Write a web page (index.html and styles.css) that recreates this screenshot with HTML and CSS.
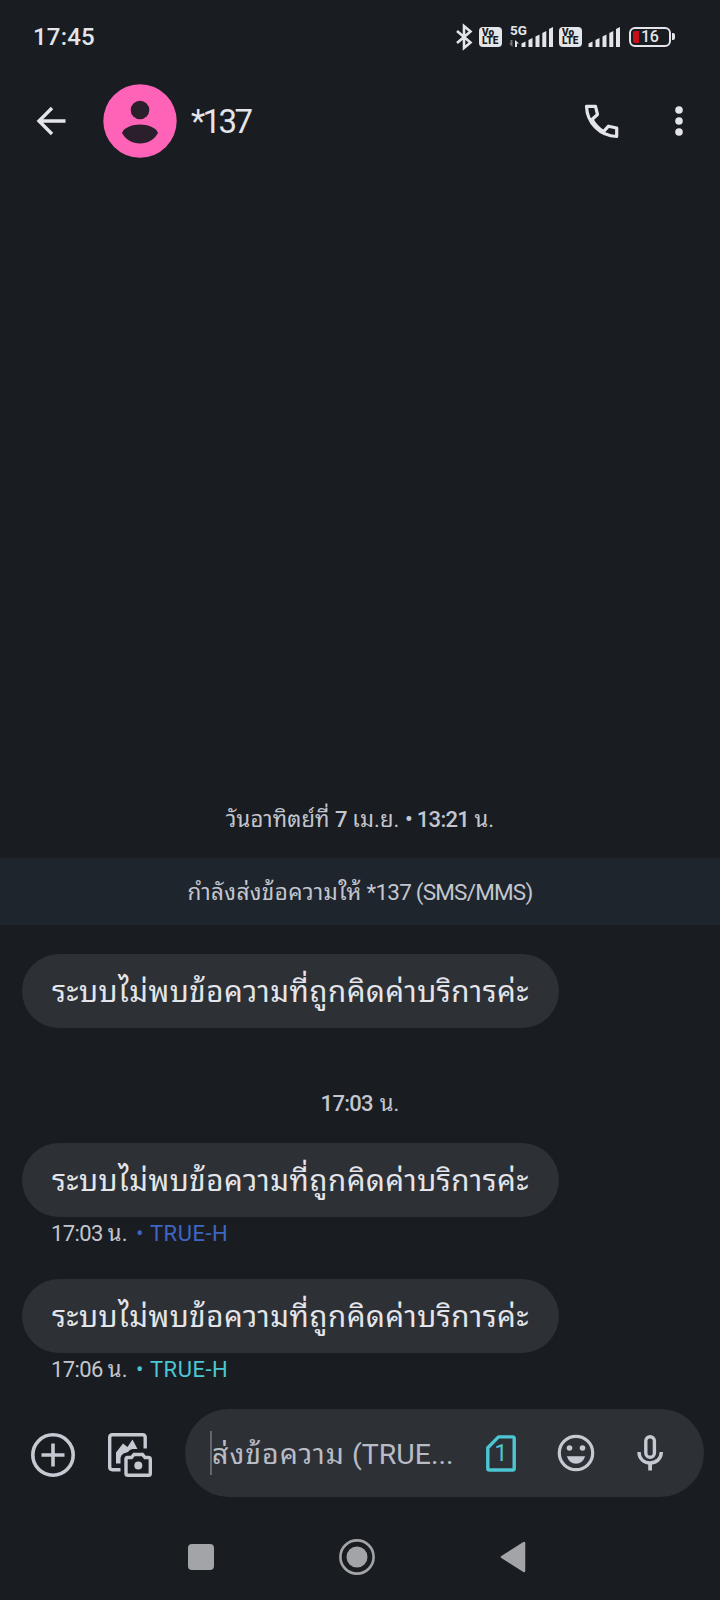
FILE: index.html
```html
<!DOCTYPE html>
<html lang="th">
<head>
<meta charset="utf-8">
<title>*137</title>
<link rel="stylesheet" href="styles.css">
</head>
<body>
<div class="phone">
  <div class="status">
    <span class="clock">17:45</span>
    <div class="status-icons">
      <svg class="bt" width="18" height="28" viewBox="0 0 18 28" fill="none" stroke="#e3e5ea" stroke-width="2.600"><path d="M2 8L15.500 19.500L9 25V3L15.500 8.500L2 20"/></svg>
      <span class="volte"><span>Vo</span><span>LTE</span></span>
      <span class="cell">
        <svg width="44" height="20" viewBox="0 0 44 20" fill="#e3e5ea"><path d="M12.500 16.500l4-2V20h-4zM19.500 13l4-2V20h-4zM26.500 9.500l4-2V20h-4zM33.300 6l4-2V20h-4zM40 2l4-2v20h-4z"/><path d="M6 13l4 3.500H8V20H6z"/><path d="M3.500 20L0 16.500h1.500V13h2z" opacity=".45"/></svg>
        <span class="five">5G</span>
      </span>
      <span class="volte second"><span>Vo</span><span>LTE</span></span>
      <svg class="bars" width="32" height="20" viewBox="12 0 32 20" fill="#e3e5ea"><path d="M12.500 16.500l4-2V20h-4zM19.500 13l4-2V20h-4zM26.500 9.500l4-2V20h-4zM33.300 6l4-2V20h-4zM40 2l4-2v20h-4z"/></svg>
      <span class="battery"><span class="level"></span><span class="pct">16</span></span>
      <span class="tip"></span>
    </div>
  </div>

  <header class="bar">
    <svg class="back" width="30" height="30" viewBox="0 0 30 30" fill="none" stroke="#e3e5ea" stroke-width="3.400"><path d="M16 2L3 15L16 28M3 15H29.500"/></svg>
    <svg class="avatar" width="74" height="74" viewBox="0 0 74 74"><circle cx="37" cy="37" r="36.700" fill="#ff63b8"/><circle cx="37" cy="26" r="9.300" fill="#2a1f2b"/><path d="M19 49C21 43.500 29 40.500 37 40.500S53 43.500 55 49C51.500 55.500 44.500 59.500 37 59.500S22.500 55.500 19 49Z" fill="#2a1f2b"/></svg>
    <span class="name">*137</span>
    <svg class="call" width="35" height="35" viewBox="0 0 35 35" fill="none" stroke="#e3e5ea" stroke-width="3.200" stroke-linejoin="round"><path d="M2.500 2.300H11.500L13.500 10.500L8 15.500C11 21 14.500 24.500 19.500 27.600L24.500 22.200L32.700 24V32.500C16 32 3 19 2.500 2.300Z"/></svg>
    <svg class="more" width="8" height="32" viewBox="0 0 8 32" fill="#e3e5ea"><circle cx="4" cy="5" r="3.800"/><circle cx="4" cy="16" r="3.800"/><circle cx="4" cy="27" r="3.800"/></svg>
  </header>

  <main class="thread">
    <div class="stamp"><span class="date"><span class="th">วันอาทิตย์ที่</span> <b>7</b> <span class="th">เม.ย.</span> <b>• 13:21</b> น.</span></div>
    <div class="banner"><span class="notice"><span class="th">กำลังส่งข้อความให้</span> *137 (SMS/MMS)</span></div>
    <div class="bubble first">ระบบไม่พบข้อความที่ถูกคิดค่าบริการค่ะ</div>
    <div class="stamp later"><span><b>17:03</b> น.</span></div>
    <div class="bubble">ระบบไม่พบข้อความที่ถูกคิดค่าบริการค่ะ</div>
    <div class="meta"><span class="time">17:03 <span class="th">น.</span></span><span class="sim blue">• TRUE-H</span></div>
    <div class="bubble">ระบบไม่พบข้อความที่ถูกคิดค่าบริการค่ะ</div>
    <div class="meta"><span class="time">17:06 <span class="th">น.</span></span><span class="sim teal">• TRUE-H</span></div>
  </main>

  <div class="compose">
    <svg class="plus" width="44" height="44" viewBox="0 0 44 44" fill="none" stroke="#c6c8d2" stroke-width="3.600"><circle cx="22" cy="22" r="20.200"/><path d="M22 10.500V33.500M10.500 22H33.500"/></svg>
    <svg class="gallery" width="44" height="44" viewBox="0 0 44 44" fill="none" stroke="#c6c8d2" stroke-width="3.400"><path d="M37.200 15.500V4.500Q37.200 1.700 34.500 1.700H4.500Q1.700 1.700 1.700 4.500V34Q1.700 36.700 4.500 36.700H12.500"/><path d="M8 30.500V19.500L15 10.500L19.500 14L24.500 6.500L29.500 16H24.500Q21.500 16.500 20 19L15.500 20.500Q12.800 22 12.500 25V30.500Z" fill="#c6c8d2" stroke="none"/><path d="M19.500 24.500H23.500L26 21.500H34.500L37 24.500H40.500Q42.300 24.500 42.300 26.500V40.500Q42.300 42.300 40.500 42.300H20Q18 42.300 18 40.500V26.500Q18 24.500 19.500 24.500Z"/><circle cx="30.300" cy="32.500" r="4" fill="#c6c8d2" stroke="none"/></svg>
    <div class="field">
      <span class="caret"></span>
      <span class="hint"><span class="th">ส่งข้อความ</span> (TRUE...</span>
      <span class="simcard"><svg width="30" height="37" viewBox="0 0 30 37" fill="none" stroke="#4cc6d3" stroke-width="3.400" stroke-linejoin="round"><path d="M12.500 1.900H26.500Q28.200 1.900 28.200 3.600V33.400Q28.200 35 26.500 35H3.500Q1.800 35 1.800 33.400V12.800Z"/></svg><span class="simno">1</span></span>
      <svg class="smile" width="38" height="38" viewBox="0 0 38 38" fill="#c6c8d2"><circle cx="19" cy="19" r="16.700" fill="none" stroke="#c6c8d2" stroke-width="3.200"/><circle cx="12.500" cy="14" r="2.800"/><circle cx="25.500" cy="14" r="2.800"/><path d="M9.800 22.200H28.200Q25.500 29.700 19 29.700T9.800 22.200Z"/></svg>
      <svg class="mic" width="26" height="36" viewBox="0 0 26 36" fill="none" stroke="#c6c8d2" stroke-width="3.400"><rect x="8.800" y="1.700" width="8.600" height="20.500" rx="4.300"/><path d="M2 17C2 24 7 28 13 28S24.300 24 24.300 17"/><path d="M13.100 28V35.500" stroke-width="3.800"/></svg>
    </div>
  </div>

  <nav class="keys">
    <svg class="recent" width="26" height="26" viewBox="0 0 26 26"><rect width="26" height="26" rx="4" fill="#a3a4a7"/></svg>
    <svg class="home" width="36" height="36" viewBox="0 0 36 36"><circle cx="18" cy="18" r="16.600" fill="none" stroke="#a3a4a7" stroke-width="2.600"/><circle cx="18" cy="18" r="10.500" fill="#a3a4a7"/></svg>
    <svg class="prev" width="26" height="32" viewBox="0 0 26 32"><path d="M2 16L24 2V30Z" fill="#a3a4a7" stroke="#a3a4a7" stroke-width="2.500" stroke-linejoin="round"/></svg>
  </nav>
</div>
</body>
</html>
```
FILE: styles.css
```css
* { box-sizing: border-box; }
body { margin: 0; background: #191c21; }
svg { display: block; flex: none; }
b { font-weight: 500; }
.phone {
  width: 720px; height: 1600px; overflow: hidden;
  display: flex; flex-direction: column;
  background: #191c21; color: #e3e5ea;
  font-family: Roboto, "Noto Sans Thai Looped", "Noto Looped Thai", Loma, Garuda, "Noto Sans Thai", "Noto Sans", sans-serif;
  white-space: nowrap;
}
.status { flex: none; height: 72px; display: flex; justify-content: space-between; padding: 1px 45px 0 33px; align-items: center; }
.clock { font-size: 24px; font-weight: 500; letter-spacing: .2px; }
.status-icons { display: flex; align-items: center; }
.bt { margin-right: 1px; }
.volte {
  width: 23px; height: 20px; margin-left: 5px; border-radius: 4px; background: #e3e5ea; color: #191c21;
  display: flex; flex-direction: column; padding: 2px 0 0 3px; font-size: 10px; line-height: 8.500px; font-weight: 900;
}
.volte.second { margin-left: 6px; }
.cell { position: relative; margin-left: 7px; }
.five { position: absolute; left: 1px; top: -4px; font-size: 13.500px; line-height: 14px; font-weight: 700; }
.bars { margin-left: 6px; }
.battery {
  width: 42px; height: 20px; margin-left: 9px; border: 2px solid #e3e5ea; border-radius: 6px;
  display: flex; align-items: center; padding-left: 2px; gap: 2px;
}
.level { width: 6px; height: 12px; border-radius: 2px 0 0 2px; background: #c5101c; }
.pct { font-size: 16px; line-height: 16px; letter-spacing: -.3px; font-weight: 500; }
.tip { width: 3px; height: 7px; margin-left: 1px; background: #e3e5ea; border-radius: 0 2px 2px 0; }

.bar { flex: none; height: 98px; display: flex; align-items: center; padding: 0 37px 0 36px; }
.avatar { margin-left: 36.500px; }
.name { margin-left: 14.500px; font-size: 33px; letter-spacing: -2.600px; flex: 1; }
.more { margin-left: 56px; }

.thread { flex: none; height: 1227px; display: flex; flex-direction: column; padding-top: 628px; }
.stamp { flex: none; height: 42px; display: flex; justify-content: center; align-items: center; padding-bottom: 4px; font-size: 22px; color: #c3c6cf; }
.stamp b { letter-spacing: -.7px; }
.stamp .th { letter-spacing: .15px; }
.banner {
  flex: none; height: 67px; margin: 18px 0 29px; padding-bottom: 4px; background: #1e252d; color: #c3c6cf; font-size: 22.500px; letter-spacing: -.8px;
  display: flex; justify-content: center; align-items: center;
}
.banner .th { letter-spacing: .4px; }
.bubble {
  width: 537px; height: 74px; flex: none; margin-left: 22px; padding: 0 0 5px 30px; border-radius: 37px;
  background: #2d3035; font-size: 29.500px; letter-spacing: .550px; display: flex; align-items: center;
}
.stamp.later { margin: 54px 0 19px; }
.later { word-spacing: 1.500px; }
.meta { flex: none; height: 34px; margin: 0 0 28px 51px; padding-bottom: 3px; display: flex; align-items: center; gap: 8px; font-size: 22px; color: #c3c6cf; }
.meta { align-items: baseline; line-height: 33px; }
.time { letter-spacing: -.6px; }
.time .th { letter-spacing: .4px; }
.sim { letter-spacing: .5px; word-spacing: .500px; }
.sim.blue { color: #3f66c4; }
.sim.teal { color: #4cc6d3; }

.compose { flex: none; height: 112px; display: flex; align-items: center; padding: 0 16px 0 31px; }
.plus, .gallery { margin-top: 3px; }
.gallery { margin-left: 33px; }
.field { flex: 1; height: 88px; margin-left: 33px; border-radius: 44px; background: #2d3035; display: flex; align-items: center; padding: 0 40px 0 25px; }
.caret { width: 2px; height: 44px; background: #63666d; }
.hint { width: 249px; padding-bottom: 4px; font-size: 28.500px; color: #b9bcc5; }
.hint .th { letter-spacing: 1px; }
.simcard { position: relative; margin-left: 25px; }
.simno { position: absolute; inset: 0; text-align: center; font-size: 23px; line-height: 37px; color: #4cc6d3; }
.smile { margin-left: 41px; }
.mic { margin-left: 42px; }

.keys { flex: 1; display: flex; align-items: center; padding: 4px 0 0 188px; }
.home { margin-left: 125px; }
.prev { margin-left: 125px; }
```
